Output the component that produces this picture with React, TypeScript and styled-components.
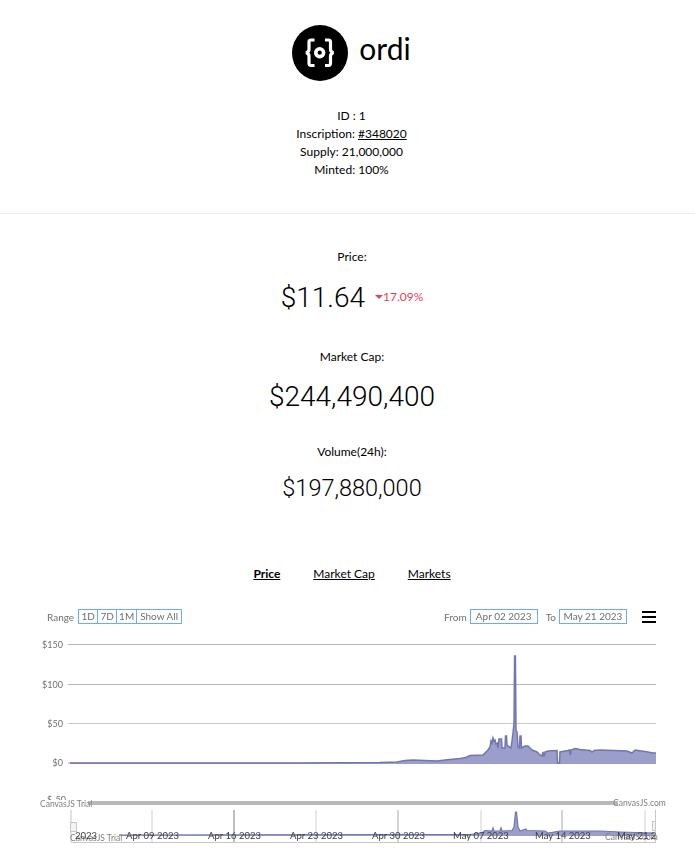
import React from "react";
import styled, { createGlobalStyle } from "styled-components";

const Global = createGlobalStyle`
  html, body { margin: 0; padding: 0; background: #fff; }
  body { font-family: Lato, "Liberation Sans", sans-serif; color: #000; }
  a { color: inherit; }
`;

const Page = styled.div`
  width: 695px;
  height: 859px;
  overflow: hidden;
`;
const Header = styled.header`
  height: 214px;
  padding-top: 25px;
  box-sizing: border-box;
  border-bottom: 1px solid #eeeeee;
  text-align: center;
`;
const TitleRow = styled.div`
  display: flex;
  justify-content: center;
  align-items: center;
  gap: 11px;
  height: 56px;
  margin-bottom: 26px;
  padding-left: 8px;
`;
const Title = styled.h1`
  margin: 0 0 11px;
  font-size: 30px;
  font-weight: 400;
  line-height: 36px;
`;
const InfoLine = styled.div`
  font-size: 12px;
  line-height: 18px;
  padding-left: 8px;
`;
const Stats = styled.section`
  display: flex;
  flex-direction: column;
  align-items: center;
  padding: 34px 0 0 9px;
`;
const StatLabel = styled.div`
  font-size: 12px;
  line-height: 18px;
`;
const StatValue = styled.div<{ $size: number; $gap: number; $after: number }>`
  display: flex;
  align-items: center;
  gap: 10px;
  height: 40px;
  font-family: Roboto, sans-serif;
  font-weight: 300;
  font-size: ${(p) => p.$size}px;
  margin-top: ${(p) => p.$gap}px;
  margin-bottom: ${(p) => p.$after}px;
`;
const Change = styled.span`
  display: flex;
  align-items: center;
  font-family: Lato, sans-serif;
  font-weight: 400;
  font-size: 12px;
  line-height: 16px;
  color: #e8405a;
  white-space: nowrap;
`;
const Caret = styled.i`
  width: 0;
  height: 0;
  border-left: 4px solid transparent;
  border-right: 4px solid transparent;
  border-top: 4px solid #e8405a;
`;
const Tabs = styled.nav`
  display: flex;
  justify-content: center;
  gap: 33px;
  margin-top: 57px;
  padding-left: 9px;
  font-size: 12px;
  line-height: 18px;
`;
const Tab = styled.a<{ $active?: boolean }>`
  text-decoration: underline;
  font-weight: ${(p) => (p.$active ? 700 : 400)};
`;
const Toolbar = styled.div`
  display: flex;
  align-items: center;
  justify-content: space-between;
  height: 15px;
  margin: 26px 0 1px;
  padding: 0 39px 0 47px;
  font-size: 10px;
  color: #707070;
  filter: blur(0.35px);
`;
const ToolGroup = styled.div`
  display: flex;
  align-items: center;
`;
const ToolLabel = styled.span<{ $gap: number }>`
  margin-right: ${(p) => p.$gap}px;
`;
const RangeButtons = styled.div`
  display: flex;
  border: 1px solid #6aaef0;
  height: 13px;
`;
const RangeButton = styled.span<{ $w: number }>`
  width: ${(p) => p.$w}px;
  text-align: center;
  line-height: 13px;
  & + & { border-left: 1px solid #6aaef0; }
`;
const DateBox = styled.span<{ $gap?: number }>`
  width: 66px;
  height: 13px;
  border: 1px solid #6aaef0;
  text-align: center;
  line-height: 13px;
  margin-right: ${(p) => p.$gap ?? 0}px;
`;
const Burger = styled.span`
  width: 14px;
  height: 12px;
  margin-left: 15px;
  box-sizing: border-box;
  border-top: 2px solid #000;
  border-bottom: 2px solid #000;
  position: relative;
  &::after {
    content: "";
    position: absolute;
    left: 0;
    right: 0;
    top: 3px;
    height: 2px;
    background: #000;
  }
`;
const Chart = styled.svg`
  display: block;
  width: 695px;
  height: 234px;
  filter: blur(0.4px);
`;

const mainLine =
  "M70 763 L300 763 L380 762.5 L397 762 L405 760.5 L413 760 L425 760.5 L437 761 L445 760 L460 758.5 L466 757.5 L470 755.5 L483 755 L486 752 L488 750 L490 747 L491 741 L492 743 L493 738 L494 741 L495 740 L496 744 L497.5 743 L498 748 L499 739 L501.5 739 L502 748 L505 748 L505.5 736 L506.5 736 L507 745 L511 748 L512 741 L513 733 L514 723 L514.6 656 L515.4 656 L516 730 L517 732 L518 747 L519.5 748 L520 736 L521 736 L521.5 748 L525 746 L528 746 L530 748 L532 750 L537 752 L540 755 L542 756 L543 752 L544 756.5 L545 752 L548 751 L557 750.5 L557.5 763 L559.5 763 L560 752 L568 750.5 L569.5 750 L570.5 755 L571 750 L575 748.5 L580 749.5 L590 750.5 L592 752 L594 750.5 L600 750 L627 751 L632 753 L635 750 L645 751.5 L653 753 L656 753";
const navLine =
  "M119 835 L400 834.5 L470 834.5 L482 833 L485 830.5 L492 831 L493 828 L494 831 L500 831 L501 828 L502 831 L512 830.5 L514 827 L515.5 812 L516.5 812 L518 827 L520 831 L526 829 L527 830.5 L545 831 L548 833 L560 831 L600 831 L620 832 L654 833";
const axisY = [
  { y: 644.5, t: "$150" },
  { y: 684.5, t: "$100" },
  { y: 723.5, t: "$50" },
  { y: 763, t: "$0" },
];
const navGrid = [
  { x: 152, c: "#d0d0d0" },
  { x: 234, c: "#808080" },
  { x: 316, c: "#d0d0d0" },
  { x: 398, c: "#a8a8a8" },
  { x: 481, c: "#d0d0d0" },
  { x: 562, c: "#a8a8a8" },
  { x: 645, c: "#d0d0d0" },
];
const navLabels = [
  { x: 75, t: "2023" },
  { x: 126, t: "Apr 09 2023" },
  { x: 208, t: "Apr 16 2023" },
  { x: 290, t: "Apr 23 2023" },
  { x: 372, t: "Apr 30 2023" },
  { x: 453, t: "May 07 2023" },
  { x: 535, t: "May 14 2023" },
  { x: 617, t: "May 21 2" },
];
const O = 625;

function Logo() {
  return (
    <svg width="56" height="56" viewBox="0 0 56 56">
      <circle cx="28" cy="28" r="28" fill="#000" />
      <g fill="none" stroke="#fff" strokeWidth="3.2">
        <path d="M22.5 15 H19 Q17 15 17 17 V24.5 Q17 27 14 27.7 Q17 28.4 17 31 V38 Q17 40.5 19 40.5 H22.5" />
        <path d="M33 15 H36.5 Q38.5 15 38.5 17 V24.5 Q38.5 27 41.5 27.7 Q38.5 28.4 38.5 31 V38 Q38.5 40.5 36.5 40.5 H33" />
        <circle cx="27.7" cy="27.7" r="3.9" strokeWidth="3.6" />
      </g>
    </svg>
  );
}

export default function App() {
  return (
    <Page>
      <Global />
      <Header>
        <TitleRow>
          <Logo />
          <Title>ordi</Title>
        </TitleRow>
        <InfoLine>ID : 1</InfoLine>
        <InfoLine>
          Inscription: <a href="#">#348020</a>
        </InfoLine>
        <InfoLine>Supply: 21,000,000</InfoLine>
        <InfoLine>Minted: 100%</InfoLine>
      </Header>
      <Stats>
        <StatLabel>Price:</StatLabel>
        <StatValue $size={28} $gap={11} $after={31}>
          $11.64
          <Change>
            <Caret />
            17.09%
          </Change>
        </StatValue>
        <StatLabel>Market Cap:</StatLabel>
        <StatValue $size={28} $gap={10} $after={27}>$244,490,400</StatValue>
        <StatLabel>Volume(24h):</StatLabel>
        <StatValue $size={23.5} $gap={7} $after={0}>$197,880,000</StatValue>
      </Stats>
      <Tabs>
        <Tab href="#" $active>Price</Tab>
        <Tab href="#">Market Cap</Tab>
        <Tab href="#">Markets</Tab>
      </Tabs>
      <Toolbar>
        <ToolGroup>
          <ToolLabel $gap={4}>Range</ToolLabel>
          <RangeButtons>
            <RangeButton $w={18}>1D</RangeButton>
            <RangeButton $w={18}>7D</RangeButton>
            <RangeButton $w={19}>1M</RangeButton>
            <RangeButton $w={44}>Show All</RangeButton>
          </RangeButtons>
        </ToolGroup>
        <ToolGroup>
          <ToolLabel $gap={3}>From</ToolLabel>
          <DateBox $gap={8}>Apr 02 2023</DateBox>
          <ToolLabel $gap={3}>To</ToolLabel>
          <DateBox>May 21 2023</DateBox>
          <Burger />
        </ToolGroup>
      </Toolbar>
      <Chart viewBox={`0 ${O} 695 234`}>
        {axisY.map((a) => (
          <g key={a.t}>
            <line x1="68" x2="656" y1={a.y} y2={a.y} stroke={a.t === "$50" ? "#c8c8c8" : "#b4b4b4"} />
            <text x="63" y={a.y + 3} textAnchor="end" fontFamily="Lato, sans-serif" fontSize="9" fill="#707070">
              {a.t}
            </text>
          </g>
        ))}
        <path d={mainLine + " L656 764 L70 764 Z"} fill="#9a9ec8" />
        <path d={mainLine} fill="none" stroke="#7276b0" strokeWidth="1.5" />
        <text x="47" y="803" fontFamily="Lato, sans-serif" fontSize="9" fill="#707070">$-50</text>
        <rect x="40" y="800" width="50" height="10" fill="#fff" />
        <rect x="88" y="801" width="530" height="4" fill="#b8b8b8" />
        <text x="40" y="807" fontFamily="Lato, sans-serif" fontSize="8.5" fill="#808080">CanvasJS Trial</text>
        <text x="613" y="806" fontFamily="Lato, sans-serif" fontSize="8.5" fill="#808080">CanvasJS.com</text>
        <line x1="71" x2="71" y1="810" y2="842" stroke="#c4c4dc" />
        <line x1="655.5" x2="655.5" y1="810" y2="842" stroke="#c8c8c8" />
        <line x1="71" x2="656" y1="842.5" y2="842.5" stroke="#c8c8c8" />
        {navGrid.map((g) => (
          <line key={g.x} x1={g.x} x2={g.x} y1="810" y2="842" stroke={g.c} />
        ))}
        <path d={navLine + " L654 836 L119 836 Z"} fill="#9a9ec8" />
        <path d={navLine} fill="none" stroke="#7276b0" strokeWidth="1.2" />
        <rect x="70.5" y="822.5" width="6" height="9" fill="#f4f4f4" stroke="#c8c8c8" />
        <rect x="652.5" y="821.5" width="3" height="9" fill="#f4f4f4" stroke="#c8c8c8" />
        <text x="70" y="841" fontFamily="Lato, sans-serif" fontSize="8.5" fill="#808080">CanvasJS Trial</text>
        <text x="605" y="840" fontFamily="Lato, sans-serif" fontSize="8.5" fill="#808080">CanvasJS.com</text>
        {navLabels.map((l) => (
          <text key={l.t} x={l.x} y="839" fontFamily="Lato, sans-serif" fontSize="9.5" fill="#404040">
            {l.t}
          </text>
        ))}
      </Chart>
    </Page>
  );
}
